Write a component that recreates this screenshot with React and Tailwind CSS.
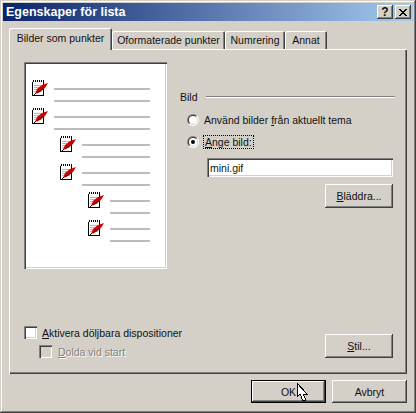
const raised = 'shadow-[inset_-1px_-1px_0_#404040,inset_1px_1px_0_#fff,inset_-2px_-2px_0_#808080]';
const sunken = 'shadow-[inset_1px_1px_0_#808080,inset_2px_2px_0_#404040,inset_-1px_-1px_0_#fff,inset_-2px_-2px_0_#d4d0c8]';

const previewRows = [
  { indent: 'pl-[8px]' },
  { indent: 'pl-[8px]' },
  { indent: 'pl-[36px]' },
  { indent: 'pl-[36px]' },
  { indent: 'pl-[64px]' },
  { indent: 'pl-[64px]' },
];

function NoteIcon() {
  return (
    <svg width="16" height="16" viewBox="0 0 16 16" shapeRendering="crispEdges" className="shrink-0">
      <rect x="0" y="2" width="12" height="14" fill="#000" />
      <rect x="1" y="2" width="10" height="13" fill="#fff" />
      <path d="M1 0h1v2H1zM3 0h1v2H3zM5 0h1v2H5zM7 0h1v2H7zM9 0h1v2H9zM11 0h1v2h-1z" fill="#000" />
      <path d="M2 5h8v1H2zM2 7h8v1H2zM2 9h8v1H2zM2 11h8v1H2z" fill="#b8b8b8" />
      <polygon points="3,14 5,9 10,5 16,3 13,8 8,12" fill="#d00000" shapeRendering="auto" />
      <path d="M3 13l-1 2 2-1z" fill="#000" />
      <path d="M5 13l7-5" stroke="#600000" strokeWidth="1" shapeRendering="auto" />
    </svg>
  );
}

function Radio({ checked }) {
  return (
    <span className="w-[12px] h-[12px] rounded-full bg-[linear-gradient(135deg,#808080_50%,#ffffff_50%)] flex items-center justify-center shrink-0">
      <span className="w-[10px] h-[10px] rounded-full bg-[linear-gradient(135deg,#404040_50%,#d4d0c8_50%)] flex items-center justify-center">
        <span className="w-[8px] h-[8px] rounded-full bg-white flex items-center justify-center">
          {checked && <span className="w-[4px] h-[4px] rounded-full bg-black" />}
        </span>
      </span>
    </span>
  );
}

function Checkbox({ disabled }) {
  return (
    <span className={`w-[13px] h-[13px] shrink-0 ${sunken} ${disabled ? 'bg-[#d4d0c8]' : 'bg-white'}`} />
  );
}

function Button({ children, className = '' }) {
  return (
    <div className={`flex items-center justify-center bg-[#d4d0c8] ${raised} ${className}`}>
      {children}
    </div>
  );
}

function Tab({ children, width, active }) {
  return (
    <div
      className={`${width} ${active ? 'h-[22px] relative z-10 -mb-px pb-[3px]' : 'h-[18px]'} flex items-center justify-center rounded-t-[2px] bg-[#d4d0c8] shadow-[inset_1px_1px_0_#fff,inset_-1px_0_0_#404040,inset_-2px_0_0_#808080]`}
    >
      {children}
    </div>
  );
}

export default function App() {
  return (
    <div className="relative w-[416px] h-[413px] overflow-hidden bg-[#d4d0c8] p-[3px] flex flex-col text-[10.5px] leading-[14px] text-[#111] font-['Liberation_Sans',sans-serif] shadow-[inset_-1px_-1px_0_#404040,inset_1px_1px_0_#d4d0c8,inset_-2px_-2px_0_#808080,inset_2px_2px_0_#fff]">
      {/* title bar */}
      <div className="h-[18px] shrink-0 flex items-center justify-between pl-[3px] pr-[2px] bg-[linear-gradient(90deg,#0a246a,#a6caf0)]">
        <span className="text-white font-bold text-[12.5px]">Egenskaper för lista</span>
        <div className="flex gap-[2px]">
          <Button className="w-[16px] h-[14px] font-bold text-[12px]">?</Button>
          <Button className="w-[16px] h-[14px]">
            <svg width="8" height="7" viewBox="0 0 8 7" shapeRendering="crispEdges">
              <path d="M0 0h2v1H0zM6 0h2v1H6zM1 1h2v1H1zM5 1h2v1H5zM2 2h4v1H2zM3 3h2v1H3zM2 4h4v1H2zM1 5h2v1H1zM5 5h2v1H5zM0 6h2v1H0zM6 6h2v1H6z" fill="#000" />
            </svg>
          </Button>
        </div>
      </div>

      <div className="flex-1 flex flex-col px-[6px] pt-[7px]">
        {/* tabs */}
        <div className="h-[21px] flex items-end shrink-0">
          <Tab width="w-[103px]" active>Bilder som punkter</Tab>
          <Tab width="w-[113px]">Oformaterade punkter</Tab>
          <Tab width="w-[60px]">Numrering</Tab>
          <Tab width="w-[42px]">Annat</Tab>
        </div>

        {/* panel */}
        <div className="w-[398px] h-[325px] shrink-0 pl-[15px] pr-[14px] pt-[13px] flex flex-col shadow-[inset_1px_1px_0_#fff,inset_-1px_-1px_0_#404040,inset_-2px_-2px_0_#808080]">
          <div className="flex">
            <div className={`w-[143px] h-[207px] bg-white pt-[18px] shrink-0 ${sunken}`}>
              {previewRows.map((row, i) => (
                <div key={i} className={`h-[28px] flex gap-[6px] pr-[17px] ${row.indent}`}>
                  <NoteIcon />
                  <div className="flex-1 flex flex-col gap-[10px] pt-[8px]">
                    <div className="h-[2px] bg-[#bdbdbd]" />
                    <div className="h-[2px] bg-[#bdbdbd]" />
                  </div>
                </div>
              ))}
            </div>

            <div className="flex-1 ml-[13px] pt-[28px] flex flex-col">
              <div className="flex items-center gap-[8px] h-[14px]">
                <span>Bild</span>
                <div className="flex-1 h-[2px] bg-[#808080] border-b border-white -mr-[2px]" />
              </div>
              <div className="flex items-center gap-[5px] h-[14px] mt-[9px] pl-[7px]">
                <Radio />
                <span>Använd bilder <span className="underline">f</span>rån aktuellt tema</span>
              </div>
              <div className="flex items-center gap-[4px] h-[14px] mt-[8px] pl-[7px]">
                <Radio checked />
                <span className="border border-dotted border-black px-[1px] h-[14px] leading-[12px]"><span className="underline">A</span>nge bild:</span>
              </div>
              <div className={`h-[19px] ml-[27px] mt-[9px] bg-white flex items-center pl-[3px] ${sunken}`}>mini.gif</div>
              <Button className="w-[68px] h-[24px] self-end mt-[7px]"><span><span className="underline">B</span>läddra...</span></Button>
            </div>
          </div>

          <div className="flex items-end justify-between mt-[57px]">
            <div className="flex flex-col">
              <div className="flex items-center gap-[5px] h-[13px]">
                <Checkbox />
                <span><span className="underline">A</span>ktivera döljbara dispositioner</span>
              </div>
              <div className="flex items-center gap-[6px] h-[13px] mt-[6px] ml-[15px]">
                <Checkbox disabled />
                <span className="text-[#808080] [text-shadow:1px_1px_0_#fff]"><span className="underline">D</span>olda vid start</span>
              </div>
            </div>
            <Button className="w-[68px] h-[24px]"><span><span className="underline">S</span>til...</span></Button>
          </div>
        </div>

        {/* bottom buttons */}
        <div className="flex justify-end gap-[6px] mt-[6px] w-[398px]">
          <div className="w-[75px] h-[23px] border border-black">
            <Button className="w-full h-full">OK</Button>
          </div>
          <Button className="w-[75px] h-[23px]">Avbryt</Button>
        </div>
      </div>

      {/* mouse pointer */}
      <svg width="12" height="20" viewBox="0 0 12 20" className="absolute left-[296px] top-[382px]" shapeRendering="crispEdges">
        <path d="M1 1v14l3-3 3 7 3-1-3-6h4z" fill="#fff" stroke="#000" strokeWidth="1" />
      </svg>
    </div>
  );
}
